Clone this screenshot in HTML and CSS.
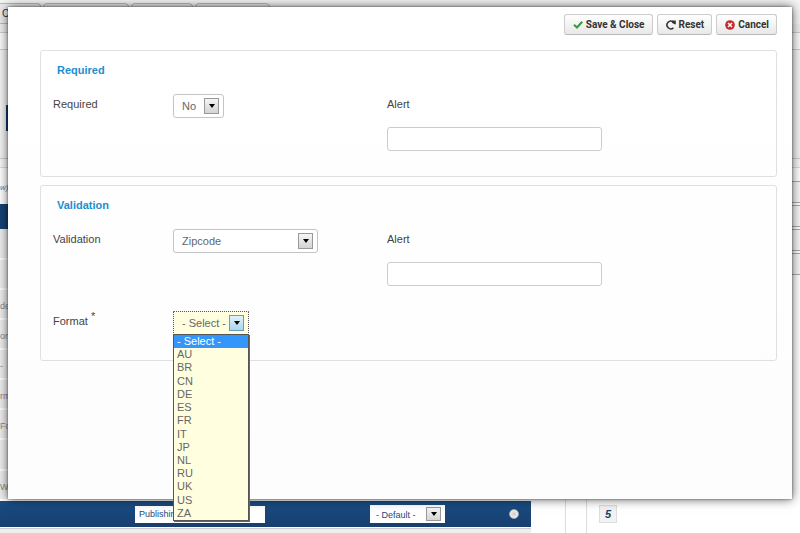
FILE: index.html
```html
<!DOCTYPE html>
<html lang="en">
<head>
<meta charset="utf-8">
<title>Validation</title>
<link rel="stylesheet" href="styles.css">
</head>
<body>
<div class="page">
  <nav class="tabs"><a class="tab tab-first" href="#">C</a><a class="tab tab-wide" href="#"></a><a class="tab" href="#"></a><a class="tab tab-mid" href="#"></a></nav>
  <div class="subbar"></div>
  <div class="crumb"></div>
  <div class="hero"><span class="hero-mark"></span></div>
  <div class="strip"></div>
  <div class="columns">
    <div class="left">
      <p class="note">w)</p>
      <div class="list-head"></div>
      <div class="row row-tall"></div>
      <div class="row"></div>
      <div class="row">de</div>
      <div class="row">or</div>
      <div class="row">-</div>
      <div class="row">rm</div>
      <div class="row">Fo</div>
      <div class="row row-tall"></div>
      <div class="row row-last">W</div>
      <div class="section-bar">
        <input class="bar-text" type="text" value="Publishing" aria-label="Section name">
        <span class="pick bar-pick"><select aria-label="Section style"><option>- Default -</option></select><span class="arrow"></span></span>
        <input class="bar-radio" type="radio" aria-label="Choose section">
      </div>
      <div class="row row-after"></div>
    </div>
    <div class="gutter"></div>
    <div class="right">
      <div class="stack"><i></i><i></i><i></i><i></i></div>
      <span class="number">5</span>
    </div>
  </div>
</div>

<main class="modal" role="dialog" aria-label="Field settings">
  <div class="toolbar">
    <button type="button"><svg class="icon" viewBox="0 0 10 10"><path d="M1 4.7 4 7.5 9.2 1.7" fill="none" stroke="#3a9a45" stroke-width="2.1"/></svg>Save &amp; Close</button>
    <button type="button"><svg class="icon" viewBox="0 0 10 10"><path d="M7.4 7.8A3.8 3.8 0 1 1 7 1.9" fill="none" stroke="#333" stroke-width="1.6"/><path d="M6 0.6H9.8V4.3H8.4L6 2.7Z" fill="#333"/></svg>Reset</button>
    <button type="button"><svg class="icon" viewBox="0 0 10 10"><circle cx="5" cy="5" r="4.8" fill="#c5292b"/><path d="M3 3 7 7M7 3 3 7" stroke="#fff" stroke-width="1.5"/></svg>Cancel</button>
  </div>

  <section class="panel">
    <h2>Required</h2>
    <div class="fields">
      <label for="required">Required</label>
      <div><span class="pick pick-small"><select id="required"><option>No</option><option>Yes</option></select><span class="arrow"></span></span></div>
      <div class="alert"><label for="alert1">Alert</label><input id="alert1" type="text"></div>
    </div>
  </section>

  <section class="panel">
    <h2>Validation</h2>
    <div class="fields">
      <label for="validation">Validation</label>
      <div><span class="pick pick-wide"><select id="validation"><option>Zipcode</option></select><span class="arrow"></span></span></div>
      <div class="alert"><label for="alert2">Alert</label><input id="alert2" type="text"></div>
      <label for="format">Format <sup>*</sup></label>
      <div><span class="pick pick-open"><select id="format"><option>- Select -</option></select><span class="arrow"></span>
        <ul class="menu" role="listbox" aria-label="Format">
          <li class="chosen" role="option" aria-selected="true">- Select -</li>
          <li role="option">AU</li><li role="option">BR</li><li role="option">CN</li><li role="option">DE</li><li role="option">ES</li><li role="option">FR</li><li role="option">IT</li><li role="option">JP</li><li role="option">NL</li><li role="option">RU</li><li role="option">UK</li><li role="option">US</li><li role="option">ZA</li>
        </ul></span></div>
    </div>
  </section>
</main>
</body>
</html>
```
FILE: styles.css
```css
* { box-sizing: border-box; }

body {
  margin: 0;
  height: 100vh;
  position: relative;
  overflow: hidden;
  background: #fff;
  color: #444;
  font: 11px/20px "Liberation Sans", Arial, sans-serif;
}

input, select, button { margin: 0; font: inherit; color: inherit; }

/* Page behind the dialog */
.page {
  display: flex;
  flex-direction: column;
  height: 100%;
  overflow: hidden;
}

.tabs {
  display: flex;
  gap: 2px;
  flex: none;
  height: 24px;
  padding-top: 3px;
  background: #f5f5f5;
}

.tab {
  width: 62px;
  border: 1px solid #bbb;
  border-radius: 4px 4px 0 0;
  background: #ececec;
  color: #333;
  text-decoration: none;
  white-space: nowrap;
}

.tab-first { width: 41px; padding-left: 2px; border-left: 0; border-top-left-radius: 0; font-size: 10px; }
.tab-wide { width: 86px; }
.tab-mid { width: 75px; }
.subbar { flex: none; height: 9px; background: #eee; border-bottom: 1px solid #ccc; }
.crumb { flex: none; height: 17px; background: #fafafa; border-bottom: 1px solid #ccc; }
.hero { flex: none; height: 109px; padding: 55px 0 0 6px; background: #f4f4f4; border-bottom: 1px solid #ccc; }
.hero-mark { display: block; width: 22px; height: 26px; background: #173a6b; }
.strip { flex: none; height: 9px; background: #f7f7f7; border-bottom: 1px solid #ddd; }

.columns { display: flex; flex: 1; min-height: 0; }
.left { flex: 0 0 531px; }
.note { height: 36px; margin: 0; padding-top: 10px; color: #1d8acb; font-size: 8px; font-style: italic; }
.list-head { height: 25px; background: #164273; }

.row {
  height: 30px;
  padding-top: 6px;
  border-bottom: 2px solid #fff;
  background: #eee;
  color: #888;
  font-size: 9px;
}

.row-tall { height: 31px; }
.row-last { height: 30px; }
.row-after { margin-top: 1px; border-top: 1px solid #ccc; }

.section-bar {
  display: flex;
  align-items: center;
  height: 26px;
  padding: 0 12px 0 135px;
  background: linear-gradient(#1a4d82, #173f70);
  color: #1b4a7c;
  font-size: 9px;
}

.bar-text {
  width: 130px;
  height: 17px;
  padding: 0 4px;
  border: 0;
  background: #fff;
}

.bar-radio {
  appearance: none;
  width: 10px;
  height: 10px;
  margin-left: auto;
  border: 1px solid #aaa;
  border-radius: 50%;
  background: radial-gradient(#ccc, #fff);
}

.gutter { width: 55px; }
.gutter::before { content: ""; display: block; width: 34px; height: 100%; border-right: 1px solid #ddd; }
.right { flex: 1; border-left: 1px solid #ddd; padding-top: 13px; }
.stack { height: 324px; }
.stack i { display: block; height: 22px; margin-bottom: 2px; border: 1px solid #aaa; border-width: 1px 0; background: #f7f7f7; }

.number {
  display: block;
  width: 18px;
  height: 18px;
  margin-left: 12px;
  border: 1px solid #ddd;
  background: #f2f2f2;
  color: #1b3f6b;
  font: italic bold 11px/17px "Liberation Sans", Arial, sans-serif;
  text-align: center;
}

/* Dialog */
.modal {
  position: absolute;
  inset: 7px 8px 34px;
  padding: 7px 15px 0 32px;
  background: linear-gradient(#fff, #fdfdfd);
  box-shadow: 0 0 10px rgba(0, 0, 0, .65), 0 0 2px rgba(0, 0, 0, .5);
}

.toolbar { display: flex; justify-content: flex-end; gap: 4px; }

.toolbar button {
  display: flex;
  align-items: center;
  gap: 3px;
  height: 21px;
  padding: 0 7px 0 8px;
  border: 1px solid #ccc;
  border-bottom-color: #b8b8b8;
  border-radius: 3px;
  background: linear-gradient(#fff, #e8e8e8);
  color: #333;
  font-family: Roboto, Arial, sans-serif;
  font-size: 10px;
  font-weight: bold;
}

.icon { width: 10px; height: 10px; }

.panel {
  margin-top: 15px;
  padding: 9px 12px 25px;
  border: 1px solid #e0e0e0;
  border-radius: 3px;
}

.panel + .panel { margin-top: 8px; }

h2 {
  margin: 0 0 14px;
  padding-left: 4px;
  color: #1b8ed0;
  font-size: 11px;
  line-height: 20px;
}

.fields {
  display: grid;
  grid-template-columns: 120px 214px minmax(0, 1fr);
  row-gap: 25px;
}

label { display: block; }
sup { line-height: 0; font-size: 11px; }

.alert input {
  display: block;
  width: 215px;
  max-width: 100%;
  height: 24px;
  margin-top: 13px;
  border: 1px solid #ccc;
  border-radius: 3px;
  background: #fff;
}

.pick { position: relative; display: block; height: 24px; }

.pick select {
  appearance: none;
  display: block;
  width: 100%;
  height: 100%;
  padding: 0 8px;
  border: 1px solid #c4c4c4;
  border-radius: 3px;
  background: #fff;
  color: #666;
}

.pick-small { width: 51px; }
.pick-wide { width: 145px; }
.pick-open { width: 76px; }
.pick-open select { border: 1px dotted #555; border-radius: 1px; background: #ffffe0; outline: 0; }

.arrow {
  position: absolute;
  top: 4px;
  right: 5px;
  display: grid;
  place-items: center;
  width: 15px;
  height: 16px;
  border: 1px solid #999;
  background: linear-gradient(#f5f5f5, #d4d4d4);
  pointer-events: none;
}

.arrow::after {
  content: "";
  border: 3px solid transparent;
  border-top: 4px solid #000;
  border-bottom: 0;
}

.pick-open .arrow { border-color: #6a9bb8; background: linear-gradient(#e2f3fc, #a9d5ee); }

.bar-pick { width: 75px; height: 18px; margin-left: 105px; }
.bar-pick select { padding: 0 6px; border: 0; border-radius: 0; color: inherit; }
.bar-pick .arrow { top: 2px; right: 4px; height: 14px; }

.menu {
  position: absolute;
  top: 23px;
  left: 0;
  display: grid;
  grid-auto-rows: 1fr;
  width: 76px;
  height: 187px;
  margin: 0;
  padding: 0;
  border: 1px solid #555;
  box-shadow: 1px 1px 0 #666;
  background: #ffffe0;
  color: #666;
  line-height: 13px;
  list-style: none;
}

.menu li { padding-left: 3px; }
.menu .chosen { background: #3296fa; color: #fff; }
```
